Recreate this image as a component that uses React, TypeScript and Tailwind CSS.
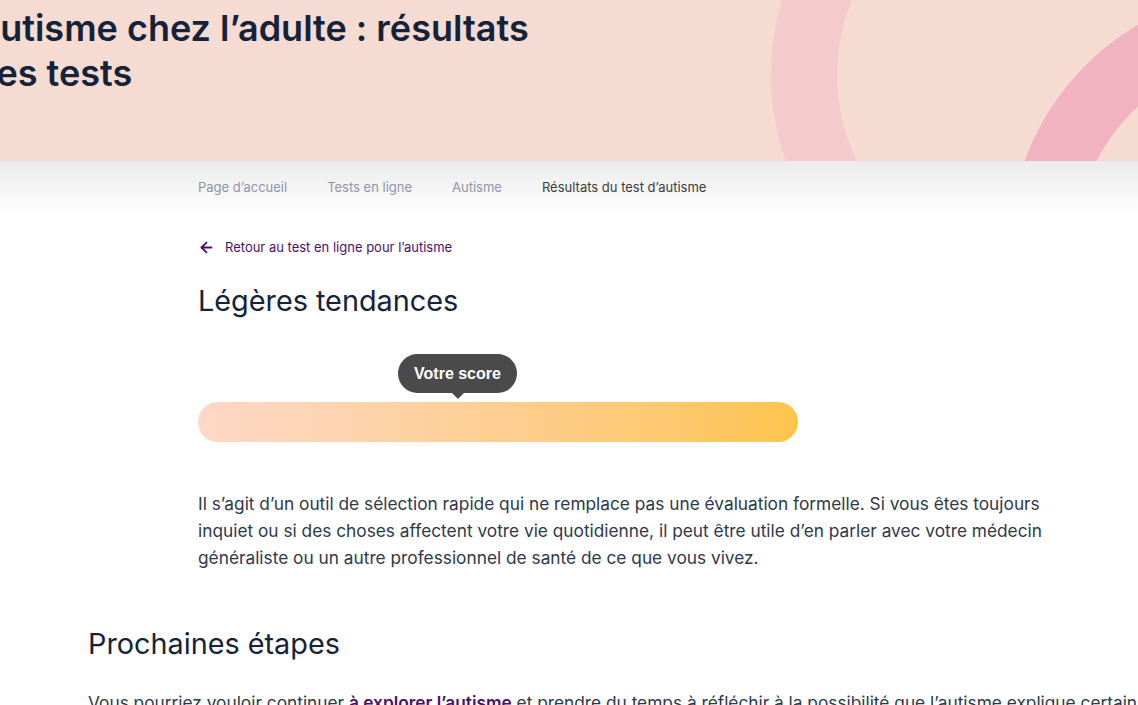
import { ArrowLeft } from "lucide-react";

const crumbs = ["Page d’accueil", "Tests en ligne", "Autisme"];

export default function App() {
  return (
    <div className="w-full min-h-screen overflow-hidden bg-white font-['Inter',sans-serif] text-[#13233a]">
      {/* header banner */}
      <header className="relative h-[161px] overflow-hidden bg-[#f5dbd2]">
        <svg
          className="absolute inset-0 h-full w-full"
          viewBox="0 0 1138 161"
          preserveAspectRatio="xMinYMin slice"
        >
          <circle cx="1032" cy="75" r="228" fill="none" stroke="#f4cbca" strokeWidth="66" />
          <circle cx="1270" cy="250" r="228" fill="none" stroke="#f0b3bf" strokeWidth="66" />
        </svg>
        <h1 className="relative ml-[-26px] w-[580px] pt-[6px] text-[36px] font-semibold leading-[45px] tracking-[0px] text-[#14233a]">
          Autisme chez l’adulte : résultats des tests
        </h1>
      </header>

      {/* breadcrumb */}
      <div className="h-[54px] bg-gradient-to-b from-[#ebebeb] to-white">
        <nav className="flex items-center gap-10 pl-[198px] pt-[17px] text-[13px] leading-[18px]">
          {crumbs.map((c) => (
            <a key={c} className="text-[#8e95a9]">
              {c}
            </a>
          ))}
          <span className="text-[#3c3c3c]">Résultats du test d’autisme</span>
        </nav>
      </div>

      <main className="pl-[198px]">
        <a className="mt-[23px] flex items-center gap-[10px] text-[13px] leading-[18px] text-[#4b0f6b]">
          <ArrowLeft size={17} strokeWidth={2.5} />
          Retour au test en ligne pour l’autisme
        </a>

        <h2 className="mt-[25px] text-[28.8px] font-normal leading-[40px] text-[#14233a]">
          Légères tendances
        </h2>

        {/* score */}
        <div className="relative mt-[33px] w-[600px] pt-[48px]">
          <div className="absolute left-[200px] top-0 flex h-[39px] w-[119px] items-center justify-center rounded-full bg-[#4a4a4a] font-['Liberation_Sans',sans-serif] text-[16px] font-bold text-white">
            Votre score
            <span className="absolute bottom-[-6px] left-1/2 h-0 w-0 -translate-x-1/2 border-x-[6px] border-t-[6px] border-x-transparent border-t-[#4a4a4a]" />
          </div>
          <div className="h-[40px] w-full rounded-full bg-gradient-to-r from-[#fed8c8] to-[#fdc44c]" />
        </div>

        <p className="mt-[48px] w-[880px] text-[17.3px] leading-[27px] text-[#2e3848]">
          Il s’agit d’un outil de sélection rapide qui ne remplace pas une évaluation formelle. Si vous êtes toujours
          inquiet ou si des choses affectent votre vie quotidienne, il peut être utile d’en parler avec votre médecin
          généraliste ou un autre professionnel de santé de ce que vous vivez.
        </p>
      </main>

      <section className="pl-[88px]">
        <h2 className="mt-[53px] text-[28.8px] font-normal leading-[40px] text-[#14233a]">
          Prochaines étapes
        </h2>
        <p className="mt-[25px] whitespace-nowrap text-[17.3px] leading-[27px] text-[#2e3848]">
          Vous pourriez vouloir continuer{" "}
          <a className="font-semibold text-[#4b0f6b] underline">à explorer l’autisme</a> et prendre du temps à
          réfléchir à la possibilité que l’autisme explique certains aspects de votre vie.
        </p>
      </section>
    </div>
  );
}
